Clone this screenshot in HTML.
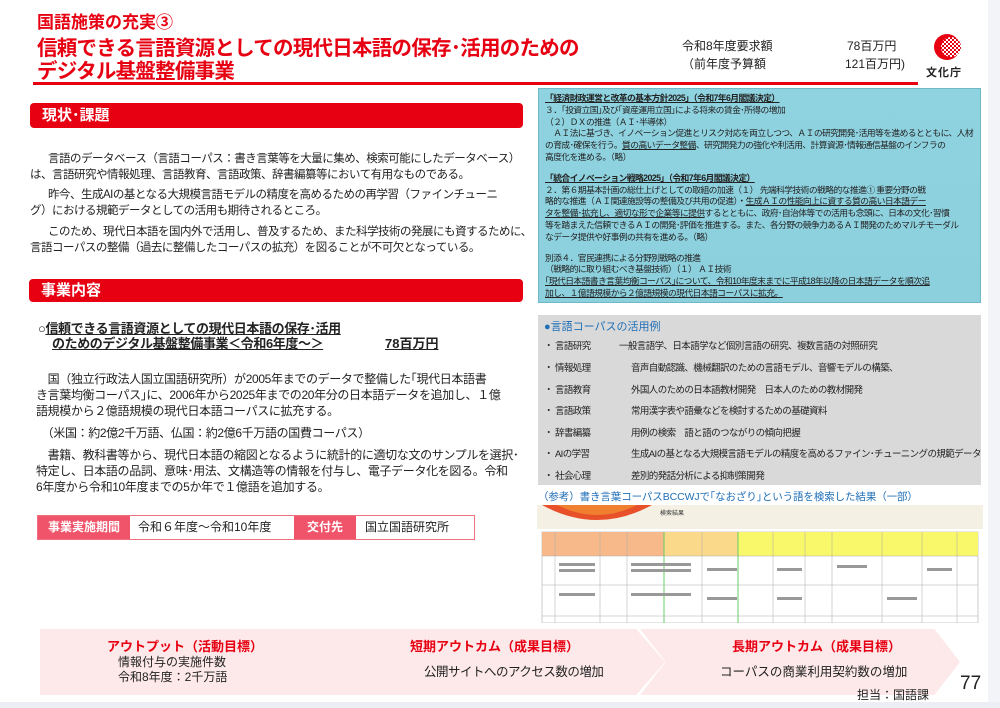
<!DOCTYPE html>
<html><head><meta charset="utf-8"><style>
*{margin:0;padding:0;box-sizing:border-box}
body{width:1000px;height:708px;background:#fff;font-family:"Liberation Sans","Noto Sans CJK JP",sans-serif;position:relative;overflow:hidden;color:#222}
.a{position:absolute;white-space:nowrap}
.red{color:#e60012;font-weight:bold}
.bar{position:absolute;background:#e60012;color:#fff;font-weight:bold;font-size:15px;border-radius:4px;padding-left:12px;line-height:25px}
.p{font-size:11.5px;letter-spacing:-0.5px;color:#222}
.q{font-size:12px;letter-spacing:-0.35px}
.blue{position:absolute;left:538px;top:88px;width:443px;height:215px;background:linear-gradient(#8fd3e0,#8ccfdd);border:1px solid #6fb8c8;font-size:8.8px;letter-spacing:-0.6px;line-height:11.8px;padding:4px 6px;color:#222;white-space:nowrap;overflow:hidden}
.blue b{text-decoration:underline}
.blue i{display:block;height:9px}
.u{text-decoration:underline}
.gray{position:absolute;left:538px;top:315px;width:443px;height:170px;background:#d9d9d9;font-size:9.5px;letter-spacing:-0.6px}
.gray div{position:absolute;left:6px;white-space:nowrap}
.gray span{position:absolute;left:87px}
.arr{position:absolute;top:629px;height:66px;background:#fde9ea}
</style></head><body>
<div style="position:absolute;right:0;top:0;width:12px;height:708px;background:#f3f4f8"></div>
<div style="position:absolute;left:0;bottom:0;width:1000px;height:6px;background:#eceef3"></div>
<div class="a red" style="left:37px;top:8px;font-size:17px">国語施策の充実③</div>
<div class="a red" style="left:37px;top:31px;font-size:20.5px;letter-spacing:-0.75px">信頼できる言語資源としての現代日本語の保存･活用のための</div>
<div class="a red" style="left:37px;top:54px;font-size:20.5px;letter-spacing:-0.75px">デジタル基盤整備事業</div>
<div style="position:absolute;left:33px;top:82px;width:885px;height:3px;background:#e60012"></div>
<div class="a" style="left:682px;top:37px;font-size:12px">令和8年度要求額</div>
<div class="a" style="left:682px;top:55px;font-size:12px">（前年度予算額</div>
<div class="a" style="left:847px;top:37px;font-size:12px">78百万円</div>
<div class="a" style="left:845px;top:55px;font-size:12px">121百万円)</div>
<svg class="a" style="left:932px;top:33px" width="32" height="30" viewBox="0 0 32 30"><defs><pattern id="ck" width="4" height="4" patternUnits="userSpaceOnUse"><rect width="4" height="4" fill="#e60012"/><rect width="2" height="2" fill="#fff"/><rect x="2" y="2" width="2" height="2" fill="#fff"/></pattern></defs><circle cx="15" cy="14" r="13" fill="#e60012"/><circle cx="19" cy="14" r="10" fill="url(#ck)"/></svg>
<div class="a" style="left:926px;top:64px;font-size:11px;font-weight:bold;letter-spacing:1px">文化庁</div>

<div class="bar" style="left:30px;top:103px;width:493px;height:25px">現状･課題</div>
<div class="a p" style="left:37px;top:150px">　言語のデータベース（言語コーパス：書き言葉等を大量に集め、検索可能にしたデータベース）</div>
<div class="a p" style="left:30px;top:166px">は、言語研究や情報処理、言語教育、言語政策、辞書編纂等において有用なものである。</div>
<div class="a p" style="left:37px;top:186px">　昨今、生成AIの基となる大規模言語モデルの精度を高めるための再学習（ファインチューニ</div>
<div class="a p" style="left:30px;top:202px">グ）における規範データとしての活用も期待されるところ。</div>
<div class="a p" style="left:37px;top:223px">　このため、現代日本語を国内外で活用し、普及するため、また科学技術の発展にも資するために、</div>
<div class="a p" style="left:30px;top:239px">言語コーパスの整備（過去に整備したコーパスの拡充）を図ることが不可欠となっている。</div>

<div class="bar" style="left:29px;top:279px;width:494px;height:23px;line-height:23px">事業内容</div>
<div class="a" style="left:38px;top:318px;font-size:13px;font-weight:bold;letter-spacing:-0.4px">○<span class="u">信頼できる言語資源としての現代日本語の保存･活用</span></div>
<div class="a u" style="left:52px;top:333px;font-size:13px;font-weight:bold;letter-spacing:-0.4px">のためのデジタル基盤整備事業＜令和6年度～＞</div>
<div class="a u" style="left:385px;top:333px;font-size:13px;font-weight:bold">78百万円</div>
<div class="a p q" style="left:36px;top:370px">　国（独立行政法人国立国語研究所）が2005年までのデータで整備した｢現代日本語書</div>
<div class="a p q" style="left:36px;top:386px">き言葉均衡コーパス｣に、2006年から2025年までの20年分の日本語データを追加し、１億</div>
<div class="a p q" style="left:36px;top:402px">語規模から２億語規模の現代日本語コーパスに拡充する。</div>
<div class="a p q" style="left:36px;top:424px">　（米国：約2億2千万語、仏国：約2億6千万語の国費コーパス）</div>
<div class="a p q" style="left:36px;top:446px">　書籍、教科書等から、現代日本語の縮図となるように統計的に適切な文のサンプルを選択･</div>
<div class="a p q" style="left:36px;top:462px">特定し、日本語の品詞、意味･用法、文構造等の情報を付与し、電子データ化を図る。令和</div>
<div class="a p q" style="left:36px;top:478px">6年度から令和10年度までの5か年で１億語を追加する。</div>
<div style="position:absolute;left:37px;top:515px;width:438px;height:25px;border:1px solid #f07080;font-size:12px;line-height:23px">
<span style="position:absolute;left:0;width:92px;height:23px;background:#f0546a;color:#fff;font-weight:bold;text-align:center">事業実施期間</span>
<span style="position:absolute;left:100px">令和６年度～令和10年度</span>
<span style="position:absolute;left:256px;width:62px;height:23px;background:#f0546a;color:#fff;font-weight:bold;text-align:center">交付先</span>
<span style="position:absolute;left:327px">国立国語研究所</span></div>

<div class="blue">
<b>「経済財政運営と改革の基本方針2025」（令和7年6月閣議決定）</b><br>
３．｢投資立国｣及び｢資産運用立国｣による将来の賃金･所得の増加<br>
（２）ＤＸの推進（ＡＩ･半導体）<br>
　ＡＩ法に基づき、イノベーション促進とリスク対応を両立しつつ、ＡＩの研究開発･活用等を進めるとともに、人材<br>
の育成･確保を行う。<span class="u">質の高いデータ整備</span>、研究開発力の強化や利活用、計算資源･情報通信基盤のインフラの<br>
高度化を進める。（略）<i></i>
<b>「統合イノベーション戦略2025」（令和7年6月閣議決定）</b><br>
２．第６期基本計画の総仕上げとしての取組の加速（１） 先端科学技術の戦略的な推進① 重要分野の戦<br>
略的な推進（ＡＩ関連施設等の整備及び共用の促進）・<span class="u">生成ＡＩの性能向上に資する質の高い日本語デー</span><br>
<span class="u">タを整備･拡充し、適切な形で企業等に提供</span>するとともに、政府･自治体等での活用も念頭に、日本の文化･習慣<br>
等を踏まえた信頼できるＡＩの開発･評価を推進する。また、各分野の競争力あるＡＩ開発のためマルチモーダル<br>
なデータ提供や好事例の共有を進める。（略）<i></i>
別添４．官民連携による分野別戦略の推進<br>
（戦略的に取り組むべき基盤技術）（１） ＡＩ技術<br>
<span class="u">｢現代日本語書き言葉均衡コーパス｣について、令和10年度末までに平成18年以降の日本語データを順次追</span><br>
<span class="u">加し、１億語規模から２億語規模の現代日本語コーパスに拡充。</span>
</div>

<div class="gray">
<div style="top:3px;font-size:11px;color:#1f6fb8;letter-spacing:0">●言語コーパスの活用例</div>
<div style="top:23px">・ 言語研究<span style="left:75px">一般言語学、日本語学など個別言語の研究、複数言語の対照研究</span></div>
<div style="top:45px">・ 情報処理<span>音声自動認識、機械翻訳のための言語モデル、音響モデルの構築、</span></div>
<div style="top:67px">・ 言語教育<span>外国人のための日本語教材開発　日本人のための教材開発</span></div>
<div style="top:88px">・ 言語政策<span>常用漢字表や語彙などを検討するための基礎資料</span></div>
<div style="top:110px">・ 辞書編纂<span>用例の検索　語と語のつながりの傾向把握</span></div>
<div style="top:131px">・ AIの学習<span>生成AIの基となる大規模言語モデルの精度を高めるファイン･チューニングの規範データ</span></div>
<div style="top:153px">・ 社会心理<span>差別的発話分析による抑制策開発</span></div>
</div>
<div class="a" style="left:538px;top:489px;font-size:10.5px;letter-spacing:-0.1px;color:#1f6fb8">（参考）書き言葉コーパスBCCWJで｢なおざり｣という語を検索した結果（一部）</div>
<svg class="a" style="left:537px;top:505px" width="446" height="118" viewBox="0 0 446 118">
<rect width="446" height="118" fill="#fff"/>
<rect x="0" y="0" width="446" height="24" fill="#f4f1e4"/>
<path d="M5 0 Q60 30 115 0Z" fill="#e8502a"/><path d="M20 0 Q60 20 100 0Z" fill="#f08030"/>
<text x="123" y="10" font-size="6" fill="#333">検索結果</text>
<rect x="5" y="27" width="436" height="91" fill="none" stroke="#999" stroke-width=".5"/>
<rect x="5" y="27" width="122" height="24" fill="#f7b98a"/>
<rect x="127" y="27" width="74" height="24" fill="#fbd98a"/>
<rect x="201" y="27" width="240" height="24" fill="#f8f86a"/>
<line x1="127" y1="27" x2="127" y2="118" stroke="#6c6"/>
<line x1="201" y1="27" x2="201" y2="118" stroke="#6c6"/>
<g stroke="#aaa" stroke-width=".5"><line x1="5" y1="51" x2="441" y2="51"/><line x1="5" y1="80" x2="441" y2="80"/><line x1="5" y1="111" x2="441" y2="111"/>
<line x1="18" y1="27" x2="18" y2="118"/><line x1="63" y1="27" x2="63" y2="118"/><line x1="90" y1="27" x2="90" y2="118"/><line x1="165" y1="27" x2="165" y2="118"/><line x1="236" y1="27" x2="236" y2="118"/><line x1="268" y1="27" x2="268" y2="118"/><line x1="295" y1="27" x2="295" y2="118"/><line x1="345" y1="27" x2="345" y2="118"/><line x1="385" y1="27" x2="385" y2="118"/><line x1="420" y1="27" x2="420" y2="118"/></g>
<g fill="#999"><rect x="22" y="58" width="36" height="3"/><rect x="22" y="64" width="36" height="3"/><rect x="94" y="58" width="60" height="3"/><rect x="94" y="64" width="60" height="3"/><rect x="170" y="63" width="30" height="3"/><rect x="240" y="63" width="25" height="3"/><rect x="300" y="60" width="30" height="3"/><rect x="390" y="63" width="25" height="3"/><rect x="22" y="88" width="36" height="3"/><rect x="94" y="88" width="60" height="3"/><rect x="170" y="92" width="30" height="3"/><rect x="240" y="92" width="25" height="3"/><rect x="350" y="92" width="30" height="3"/></g>
</svg>

<div class="arr" style="left:40px;width:290px;clip-path:polygon(0 0,92% 0,100% 50%,92% 100%,0 100%)"></div>
<div class="arr" style="left:305px;width:360px;clip-path:polygon(0 0,92% 0,100% 50%,92% 100%,0 100%,7% 50%)"></div>
<div class="arr" style="left:640px;width:320px;clip-path:polygon(0 0,92% 0,100% 50%,92% 100%,0 100%,8% 50%)"></div>
<div class="a red" style="left:107px;top:636px;font-size:13px">アウトプット（活動目標）</div>
<div class="a" style="left:118px;top:655px;font-size:12px;line-height:15px">情報付与の実施件数<br>令和8年度：2千万語</div>
<div class="a red" style="left:410px;top:636px;font-size:13px">短期アウトカム（成果目標）</div>
<div class="a" style="left:424px;top:661px;font-size:12.5px;letter-spacing:-0.5px">公開サイトへのアクセス数の増加</div>
<div class="a red" style="left:732px;top:636px;font-size:13px">長期アウトカム（成果目標）</div>
<div class="a" style="left:720px;top:661px;font-size:12.5px">コーパスの商業利用契約数の増加</div>
<div class="a" style="left:960px;top:673px;font-size:19px">77</div>
<div class="a" style="left:857px;top:686px;font-size:12px">担当：国語課</div>
</body></html>
